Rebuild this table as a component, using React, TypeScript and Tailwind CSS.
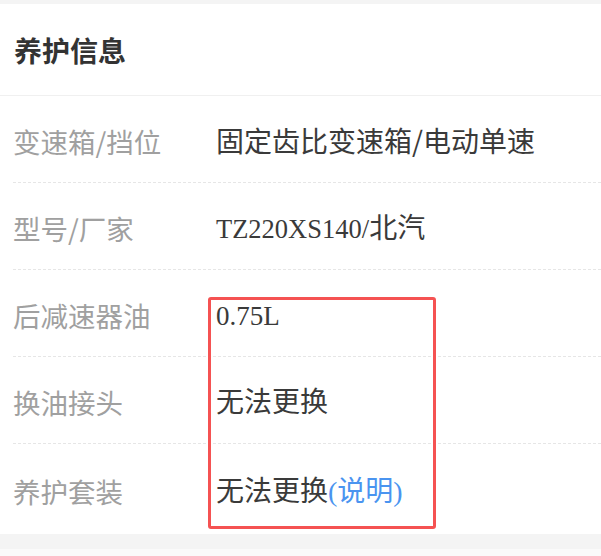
import React from "react";

const cjk = '"Noto Sans CJK SC", "Liberation Sans", sans-serif';
const valueFont = '"Liberation Serif", "Noto Sans CJK SC", serif';

const rows: { label: string; value: React.ReactNode }[] = [
  { label: "变速箱/挡位", value: <span style={{ fontFamily: cjk }}>固定齿比变速箱/电动单速</span> },
  {
    label: "型号/厂家",
    value: (
      <>
        <span className="text-[26.5px]">TZ220XS140/</span>北汽
      </>
    ),
  },
  { label: "后减速器油", value: <span className="text-[27px]">0.75L</span> },
  { label: "换油接头", value: "无法更换" },
  {
    label: "养护套装",
    value: (
      <>
        无法更换
        <span className="text-[#4a94f0]">(说明)</span>
      </>
    ),
  },
];

export default function App() {
  return (
    <div className="w-[601px] h-[556px] bg-[#fafafa] overflow-hidden" style={{ fontFamily: cjk }}>
      <div className="h-[4px] bg-[#f4f4f4]" />
      <div className="relative bg-white">
        <div className="h-[92px] border-b border-[#f0f0f0] flex items-center pl-[14px]">
          <span className="text-[28px] font-bold text-[#333] tracking-[0px]">养护信息</span>
        </div>
        <div className="pl-[13px]">
          {rows.map((r, i) => (
            <div
              key={i}
              className={
                i < rows.length - 1
                  ? "h-[87px] flex items-center border-b border-dashed border-[#e6e6e6] pt-[5px]"
                  : "h-[90px] flex items-center pt-[5px]"
              }
            >
              <div className="w-[203px] text-[27.5px] text-[#a0a0a0] leading-none">{r.label}</div>
              <div className="text-[28px] text-[#3a3a3a] leading-none" style={{ fontFamily: valueFont }}>
                {r.value}
              </div>
            </div>
          ))}
        </div>
        <div className="absolute left-[208px] top-[293px] w-[228px] h-[232px] border-[3px] border-[#f55252] rounded-[3px] pointer-events-none" />
      </div>
      <div className="h-[15px] bg-[#f4f4f4]" />
    </div>
  );
}
